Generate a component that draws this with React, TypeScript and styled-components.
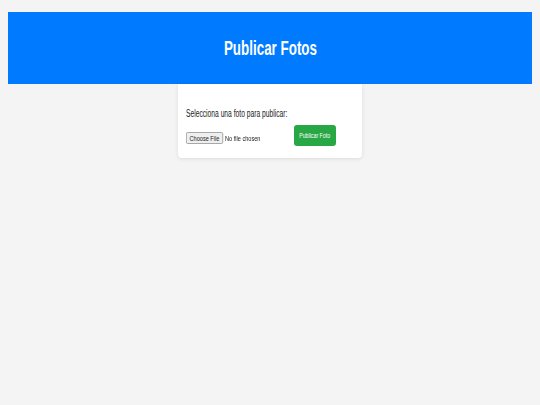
import React from "react";
import styled, { createGlobalStyle } from "styled-components";

const GlobalStyle = createGlobalStyle`
  html, body {
    margin: 0;
    padding: 0;
    background: #f4f4f4;
  }
  body {
    padding: 12px 8px 8px;
    font-family: "Liberation Sans Narrow", "Liberation Sans", Arial, sans-serif;
  }
`;

const Header = styled.header`
  background: #007bff;
  height: 72px;
  display: flex;
  align-items: center;
  justify-content: center;
`;

const Title = styled.h1`
  margin: 0;
  color: #fff;
  font-size: 20px;
  font-weight: bold;
  transform: scaleX(0.67);
`;

const Card = styled.section`
  width: 184px;
  margin: 0 auto;
  background: #fff;
  box-sizing: border-box;
  padding: 24px 8px 12px;
  border-radius: 0 0 4px 4px;
  box-shadow: 0 1px 4px rgba(0, 0, 0, 0.1);
`;

const Label = styled.label`
  display: block;
  font-size: 10px;
  line-height: 12px;
  color: #222;
  white-space: nowrap;
  transform: scaleX(0.67);
  transform-origin: left center;
`;

const Row = styled.div`
  display: flex;
  align-items: center;
  margin-top: 5px;
`;

const FileSlot = styled.div`
  width: 108px;
  overflow: hidden;
`;

const FileInput = styled.input`
  font-size: 8px;
  font-family: "Liberation Sans Narrow", "Liberation Sans", Arial, sans-serif;
  color: #222;
  margin: 0;
  transform: scaleX(0.7);
  transform-origin: left center;
  &::file-selector-button {
    font-size: 8px;
    font-family: inherit;
    height: 12px;
    padding: 0 4px;
    margin-right: 3px;
    border: 1px solid #9a9a9a;
    border-radius: 2px;
    background: #efefef;
    color: #222;
  }
`;

const Button = styled.button`
  width: 42px;
  height: 21px;
  padding: 0;
  border: none;
  border-radius: 3px;
  background: #28a745;
  color: #fff;
  font-family: "Liberation Sans Narrow", "Liberation Sans", Arial, sans-serif;
  white-space: nowrap;
  display: flex;
  align-items: center;
  justify-content: center;
`;

const ButtonText = styled.span`
  font-size: 7px;
  transform: scaleX(0.75);
`;

export default function App() {
  return (
    <>
      <GlobalStyle />
      <Header>
        <Title>Publicar Fotos</Title>
      </Header>
      <Card>
        <Label htmlFor="foto">Selecciona una foto para publicar:</Label>
        <Row>
          <FileSlot>
            <FileInput id="foto" type="file" accept="image/*" />
          </FileSlot>
          <Button type="button">
            <ButtonText>Publicar Foto</ButtonText>
          </Button>
        </Row>
      </Card>
    </>
  );
}
